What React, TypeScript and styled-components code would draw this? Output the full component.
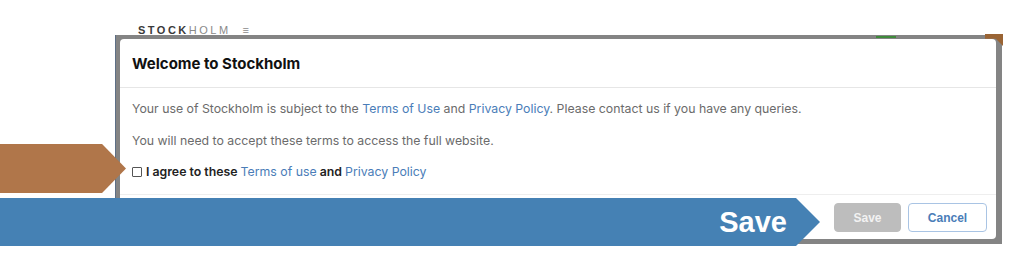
import React from 'react';
import styled, { createGlobalStyle } from 'styled-components';

const GlobalStyle = createGlobalStyle`
  html, body {
    margin: 0;
    padding: 0;
    background: #ffffff;
  }
  body {
    font-family: Inter, "Noto Sans", sans-serif;
  }
`;

const Stage = styled.div`
  position: relative;
  width: 1023px;
  height: 263px;
  overflow: hidden;
  padding-top: 26px;
  box-sizing: border-box;
`;

const LogoStrip = styled.div`
  display: flex;
  align-items: center;
  gap: 12px;
  height: 9px;
  margin-left: 138px;
  font-family: "Liberation Sans", Arial, sans-serif;
  font-size: 11px;
  line-height: 9px;
  letter-spacing: 2.5px;
  color: #3a3a3a;
`;

const LogoBold = styled.span`
  font-weight: 700;
`;

const LogoLight = styled.span`
  font-weight: 400;
  color: #8a8a8a;
`;

const Frame = styled.div`
  position: relative;
  display: flex;
  flex-direction: column;
  width: 887px;
  height: 209px;
  margin-left: 115px;
  padding: 4px 6px 5px 4px;
  box-sizing: border-box;
  background: #848484;
  border-left: 1px solid #5d6f86;
`;

const TopMarks = styled.div`
  position: absolute;
  top: 0;
  left: 0;
  right: 0;
  height: 4px;
  display: flex;
  align-items: center;
  padding-left: 760px;
`;

const GreenMark = styled.span`
  width: 20px;
  height: 2px;
  background: #3f8a3b;
`;

const CornerMark = styled.span`
  position: absolute;
  top: -1px;
  right: -1px;
  width: 18px;
  height: 12px;
  background: #9a6434;
  clip-path: polygon(0 0, 100% 0, 100% 100%, 60% 40%, 0 40%);
`;

const Modal = styled.div`
  display: flex;
  flex-direction: column;
  flex: 1;
  background: #ffffff;
  border-radius: 4px;
  overflow: hidden;
`;

const Header = styled.div`
  height: 48px;
  display: flex;
  align-items: center;
  padding: 0 12px;
  border-bottom: 1px solid #e6e6e6;
`;

const Title = styled.h2`
  margin: 0;
  font-size: 15px;
  font-weight: 700;
  color: #111111;
`;

const Body = styled.div`
  display: flex;
  flex-direction: column;
  gap: 12px;
  padding: 11px 12px 12px;
  border-bottom: 1px solid #eeeeee;
`;

const Para = styled.p`
  margin: 0;
  font-size: 12.3px;
  line-height: 20px;
  color: #6b6b6b;
`;

const Link = styled.a`
  color: #4a7db8;
  text-decoration: none;
`;

const AgreeRow = styled.label`
  display: flex;
  align-items: center;
  gap: 4px;
  margin-top: -1px;
  font-size: 12.3px;
  line-height: 20px;
  font-weight: 600;
  color: #222222;
`;

const Check = styled.span`
  width: 8px;
  height: 8px;
  border: 1px solid #555555;
  border-radius: 1px;
  background: #ffffff;
`;

const LinkLight = styled(Link)`
  font-weight: 400;
`;

const Footer = styled.div`
  display: flex;
  justify-content: flex-end;
  gap: 7px;
  padding: 8px 9px 7px;
`;

const Button = styled.button<{ $variant: 'disabled' | 'outline' }>`
  height: 29px;
  box-sizing: border-box;
  border-radius: 4px;
  font-family: "Liberation Sans", Arial, sans-serif;
  font-size: 12px;
  font-weight: 700;
  cursor: pointer;
  ${p =>
    p.$variant === 'disabled'
      ? `
        width: 67px;
        background: #bdbdbd;
        color: #f2f2f2;
        border: 1px solid #bdbdbd;
      `
      : `
        width: 79px;
        background: #ffffff;
        color: #4a7db8;
        border: 1px solid #a9c4e4;
      `}
`;

const BrownArrow = styled.div`
  position: absolute;
  left: 0;
  top: 144px;
  width: 126px;
  height: 49px;
  background: #b0764a;
  clip-path: polygon(0 0, 81% 0, 100% 50%, 81% 100%, 0 100%);
`;

const BlueBanner = styled.div`
  position: absolute;
  left: 0;
  top: 198px;
  width: 820px;
  height: 48px;
  box-sizing: border-box;
  display: flex;
  align-items: center;
  justify-content: flex-end;
  padding-right: 33px;
  background: #4581b4;
  clip-path: polygon(0 0, 796px 0, 100% 50%, 796px 100%, 0 100%);
  font-family: "Liberation Sans", Arial, sans-serif;
  font-size: 29px;
  font-weight: 700;
  color: #ffffff;
`;

export default function App() {
  return (
    <>
      <GlobalStyle />
      <Stage>
        <LogoStrip>
          <span>
            <LogoBold>STOCK</LogoBold>
            <LogoLight>HOLM</LogoLight>
          </span>
          <LogoLight>≡</LogoLight>
        </LogoStrip>
        <Frame>
          <TopMarks>
            <GreenMark />
          </TopMarks>
          <CornerMark />
          <Modal>
            <Header>
              <Title>Welcome to Stockholm</Title>
            </Header>
            <Body>
              <Para>
                Your use of Stockholm is subject to the <Link>Terms of Use</Link> and{' '}
                <Link>Privacy Policy</Link>. Please contact us if you have any queries.
              </Para>
              <Para>You will need to accept these terms to access the full website.</Para>
              <AgreeRow>
                <Check />
                <span>
                  I agree to these <LinkLight>Terms of use</LinkLight> and{' '}
                  <LinkLight>Privacy Policy</LinkLight>
                </span>
              </AgreeRow>
            </Body>
            <Footer>
              <Button $variant="disabled">Save</Button>
              <Button $variant="outline">Cancel</Button>
            </Footer>
          </Modal>
        </Frame>
        <BrownArrow />
        <BlueBanner>Save</BlueBanner>
      </Stage>
    </>
  );
}
